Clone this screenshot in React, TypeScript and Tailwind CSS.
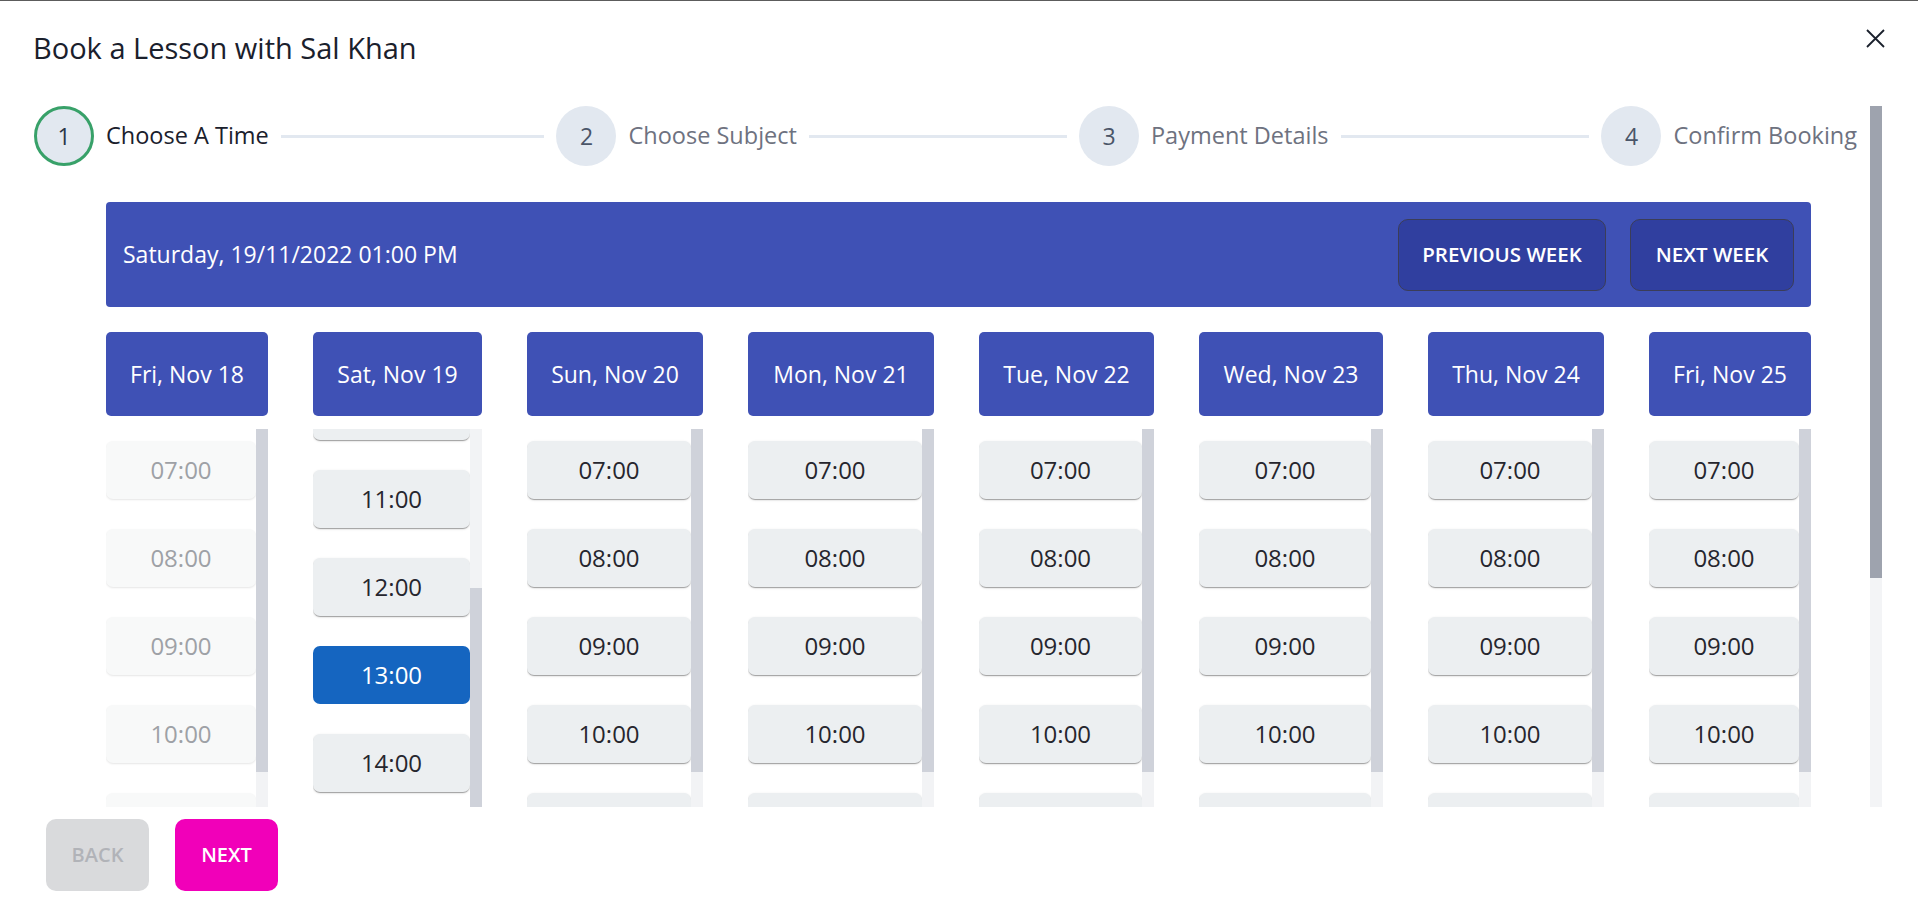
type Day = {
  label: string;
  width: string;
  past?: boolean;
  selected?: string;
  offset: string;
  thumb: string;
};

const days: Day[] = [
  { label: 'Fri, Nov 18', width: 'w-[162px]', past: true, offset: 'pt-[12px]', thumb: 'mt-0' },
  { label: 'Sat, Nov 19', width: 'w-[169px]', selected: '13:00', offset: '-mt-[311px]', thumb: 'mt-[159px]' },
  { label: 'Sun, Nov 20', width: 'w-[176px]', offset: 'pt-[12px]', thumb: 'mt-0' },
  { label: 'Mon, Nov 21', width: 'w-[186px]', offset: 'pt-[12px]', thumb: 'mt-0' },
  { label: 'Tue, Nov 22', width: 'w-[175px]', offset: 'pt-[12px]', thumb: 'mt-0' },
  { label: 'Wed, Nov 23', width: 'w-[184px]', offset: 'pt-[12px]', thumb: 'mt-0' },
  { label: 'Thu, Nov 24', width: 'w-[176px]', offset: 'pt-[12px]', thumb: 'mt-0' },
  { label: 'Fri, Nov 25', width: 'w-[162px]', offset: 'pt-[12px]', thumb: 'mt-0' },
];

const hours = Array.from({ length: 16 }, (_, i) => `${String(i + 7).padStart(2, '0')}:00`);

const steps = ['Choose A Time', 'Choose Subject', 'Payment Details', 'Confirm Booking'];

const Stepper = () => (
  <div className="flex items-center h-[60px] pr-[13px]">
    {steps.map((label, i) => (
      <div key={label} className={i < steps.length - 1 ? 'flex items-center flex-1' : 'flex items-center'}>
        <div
          className={
            i === 0
              ? 'w-[60px] h-[60px] shrink-0 rounded-full border-[3px] border-[#38a169] bg-[#e2e8f0] flex items-center justify-center text-[23px] text-[#2d3748]'
              : 'w-[60px] h-[60px] shrink-0 rounded-full bg-[#e2e8f0] flex items-center justify-center text-[23px] text-[#4a5568]'
          }
        >
          {i + 1}
        </div>
        <span
          className={
            i === 0
              ? 'ml-[12px] text-[23.5px] text-[#1a202c] whitespace-nowrap'
              : 'ml-[12px] text-[23.5px] text-[#6e7280] whitespace-nowrap'
          }
        >
          {label}
        </span>
        {i < steps.length - 1 && <div className="flex-1 h-[3px] bg-[#e2e8f0] mx-[12px]" />}
      </div>
    ))}
  </div>
);

const DayColumn = ({ day }: { day: Day }) => (
  <div className={`${day.width} flex flex-col shrink-0`}>
    <div className="h-[84px] rounded-[5px] bg-[#3f51b5] text-white text-[23px] flex items-center justify-center">
      {day.label}
    </div>
    <div className="mt-[13px] h-[695px] flex">
      <div className="flex-1 overflow-hidden">
        <div className={day.offset}>
          {hours.map((h) => {
            let cls =
              'h-[58px] mb-[30px] rounded-[7px] flex items-center justify-center text-[24px] bg-[#eceff1] text-[#26262e] shadow-[0_2px_1px_-1px_rgba(0,0,0,0.2),0_1px_1px_0_rgba(0,0,0,0.14),0_1px_3px_0_rgba(0,0,0,0.12)]';
            if (day.past) {
              cls =
                'h-[58px] mb-[30px] rounded-[7px] flex items-center justify-center text-[24px] bg-[#f8f9f9] text-[#9ea1a6] shadow-[0_1px_2px_rgba(0,0,0,0.1)]';
            } else if (day.selected === h) {
              cls = 'h-[58px] mb-[30px] rounded-[7px] flex items-center justify-center text-[24px] bg-[#1565c0] text-white';
            }
            return (
              <div key={h} className={cls}>
                {h}
              </div>
            );
          })}
        </div>
      </div>
      <div className="w-[12px] shrink-0 bg-[#f2f3f5]">
        <div className={`${day.thumb} h-[343px] bg-[#cfd2da]`} />
      </div>
    </div>
  </div>
);

export default function App() {
  return (
    <div className="w-full h-[914px] bg-white border-t border-[#5c5c5c] overflow-hidden font-['Open_Sans',sans-serif] flex flex-col">
      <div className="h-[105px] shrink-0 px-[33px] pt-[27px] flex items-start justify-between">
        <h1 className="text-[29px] leading-[40px] text-[#1a202c]">Book a Lesson with Sal Khan</h1>
        <button className="mt-[1px] w-[19px] h-[19px] text-[#1a202c]">
          <svg viewBox="0 0 19 19" width="19" height="19" fill="none" stroke="currentColor" strokeWidth="1.8">
            <path d="M1 1 L18 18 M18 1 L1 18" />
          </svg>
        </button>
      </div>

      <div className="h-[701px] shrink-0 ml-[34px] mr-[36px] flex">
        <div className="w-[1836px] shrink-0 overflow-hidden">
          <Stepper />

          <div className="ml-[72px] w-[1705px] mt-[36px]">
            <div className="h-[105px] rounded-[4px] bg-[#3f51b5] flex items-center justify-between pl-[17px] pr-[17px]">
              <span className="text-white text-[23px]">Saturday, 19/11/2022 01:00 PM</span>
              <div className="flex items-center gap-[24px]">
                <button className="w-[208px] h-[72px] rounded-[10px] bg-[#303f9f] border border-[#3b3d58] text-white text-[20.5px] font-semibold">
                  PREVIOUS WEEK
                </button>
                <button className="w-[164px] h-[72px] rounded-[10px] bg-[#303f9f] border border-[#3b3d58] text-white text-[20.5px] font-semibold">
                  NEXT WEEK
                </button>
              </div>
            </div>

            <div className="mt-[25px] flex gap-[45px]">
              {days.map((d) => (
                <DayColumn key={d.label} day={d} />
              ))}
            </div>
          </div>
        </div>
        <div className="w-[12px] shrink-0 bg-[#f3f4f6]">
          <div className="h-[472px] bg-[#9ea3ae]" />
        </div>
      </div>

      <div className="mt-[12px] ml-[46px] flex gap-[26px]">
        <button className="w-[103px] h-[72px] rounded-[10px] bg-[#d9dadc] text-[#b1b3b8] text-[20px] font-semibold">
          BACK
        </button>
        <button className="w-[103px] h-[72px] rounded-[10px] bg-[#f100b9] text-white text-[20px] font-semibold">
          NEXT
        </button>
      </div>
    </div>
  );
}
